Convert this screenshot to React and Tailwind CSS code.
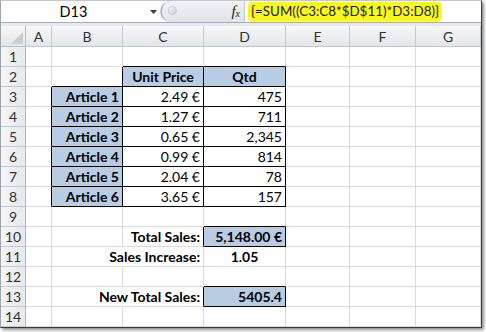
import React from "react";

const cols = ["A", "B", "C", "D", "E", "F", "G"];

// spreadsheet content, keyed by cell address
const cells = {
  C2: { t: "Unit Price", b: true, a: "center", blue: true, box: true },
  D2: { t: "Qtd", b: true, a: "center", blue: true, box: true },
  B3: { t: "Article 1", b: true, a: "right", blue: true, box: true },
  B4: { t: "Article 2", b: true, a: "right", blue: true, box: true },
  B5: { t: "Article 3", b: true, a: "right", blue: true, box: true },
  B6: { t: "Article 4", b: true, a: "right", blue: true, box: true },
  B7: { t: "Article 5", b: true, a: "right", blue: true, box: true },
  B8: { t: "Article 6", b: true, a: "right", blue: true, box: true },
  C3: { t: "2.49 €", a: "right", box: true },
  C4: { t: "1.27 €", a: "right", box: true },
  C5: { t: "0.65 €", a: "right", box: true },
  C6: { t: "0.99 €", a: "right", box: true },
  C7: { t: "2.04 €", a: "right", box: true },
  C8: { t: "3.65 €", a: "right", box: true },
  D3: { t: "475", a: "right", box: true },
  D4: { t: "711", a: "right", box: true },
  D5: { t: "2,345", a: "right", box: true },
  D6: { t: "814", a: "right", box: true },
  D7: { t: "78", a: "right", box: true },
  D8: { t: "157", a: "right", box: true },
  C10: { t: "Total Sales:", b: true, a: "right" },
  D10: { t: "5,148.00 €", b: true, a: "right", blue: true, box: true },
  C11: { t: "Sales Increase:", b: true, a: "right" },
  D11: { t: "1.05", b: true, a: "center" },
  C13: { t: "New Total Sales:", b: true, a: "right" },
  D13: { t: "5405.4", b: true, a: "right", blue: true, box: true },
};

// cells whose right gridline is hidden by overflowing text
const noRight = ["B11", "B13"];

const boxed = (r, c) => {
  const cell = cells[cols[c] + r];
  return !!(cell && cell.box);
};

function Cell({ r, c }) {
  const addr = cols[c] + r;
  const cell = cells[addr];
  const rightBlack = boxed(r, c) || boxed(r, c + 1);
  const bottomBlack = boxed(r, c) || boxed(r + 1, c);
  const hideRight = noRight.includes(addr);

  return (
    <div
      className={`h-[20px] border-r border-b flex items-end pb-[1px] px-[3px] whitespace-nowrap text-[14px] leading-[17px] text-black
        ${rightBlack ? "border-r-black" : hideRight ? "border-r-white" : "border-r-[#d9d9d9]"}
        ${bottomBlack ? "border-b-black" : "border-b-[#d9d9d9]"}
        ${cell && cell.blue ? "bg-[#b8cce4]" : "bg-white"}
        ${cell && cell.a === "center" ? "justify-center" : "justify-end"}
        ${cell && cell.b ? "font-bold" : ""}`}
    >
      {cell ? cell.t : ""}
    </div>
  );
}

function FormulaBar() {
  return (
    <div className="h-[22px] flex border-b border-[#a7adb5] bg-white">
      {/* Name box */}
      <div className="w-[159px] flex items-center relative">
        <span className="w-[145px] text-center text-[14.5px] text-black">D13</span>
        <svg className="absolute left-[149px] top-[9px]" width="7" height="4" viewBox="0 0 7 4">
          <polygon points="0,0 7,0 3.5,4" fill="#3c3c3c" />
        </svg>
      </div>
      {/* grip + fx */}
      <div className="w-[84px] relative bg-gradient-to-b from-[#f1f3f5] to-[#dfe3e8] rounded-l-full border-l-2 border-[#b3b8bf] flex items-center justify-end pr-[4px]">
        <div className="absolute left-[6px] top-[5px] w-[9px] h-[9px] rounded-full bg-gradient-to-br from-[#fafafa] to-[#c9cdd2] border border-[#c6cacf]"></div>
        <span className="font-['Liberation_Serif',serif] italic text-[15px] text-[#222] leading-none">
          f<span className="text-[10px] align-[-1px]">x</span>
        </span>
      </div>
      {/* formula */}
      <div className="flex-1 flex items-center border-l border-[#c2c7ce] pl-[3px]">
        <span className="bg-[#f8f81e] rounded-[4px] px-[3px] h-[19px] flex items-center text-[13.4px] text-[#1a1a1a]">
          {"{=SUM((C3:C8*$D$11)*D3:D8)}"}
        </span>
      </div>
    </div>
  );
}

export default function App() {
  const rows = Array.from({ length: 14 }, (_, i) => i + 1);

  return (
    <div className="w-[486px] h-[332px] bg-white overflow-hidden font-['Lato',sans-serif]">
      <div className="w-[482px] h-[328px] border-l border-t border-l-[#9ea4ab] border-t-[#c2c7cd] border-r border-b border-r-[#3a3a3a] border-b-[#3a3a3a] shadow-[2px_2px_3px_rgba(0,0,0,0.45)]">
        <FormulaBar />
        <div className="h-[3px] bg-[#e6e9ed]"></div>

        <div className="grid grid-cols-[25px_26px_71px_81px_82px_64px_66px_65px]">
          {/* column headers */}
          <div className="h-[21px] border-r border-b border-[#b9bfc7] bg-gradient-to-b from-[#f7f8f9] to-[#e3e6ea] relative">
            <svg className="absolute right-[2px] bottom-[2px]" width="12" height="12" viewBox="0 0 12 12">
              <polygon points="12,0 12,12 0,12" fill="#c9ced4" />
            </svg>
          </div>
          {cols.map((c) => (
            <div
              key={c}
              className="h-[21px] border-r border-b border-[#c3c8cf] bg-gradient-to-b from-[#f7f8f9] to-[#e3e6ea] flex items-center justify-center text-[14px] text-[#333]"
            >
              {c}
            </div>
          ))}

          {rows.map((r) => (
            <React.Fragment key={r}>
              <div className="h-[20px] border-r border-b border-[#c3c8cf] border-r-[#b3b9c1] bg-gradient-to-r from-[#f4f5f7] to-[#e6e9ed] flex items-center justify-center text-[14px] text-[#333]">
                {r}
              </div>
              {cols.map((_, c) => (
                <Cell key={c} r={r} c={c} />
              ))}
            </React.Fragment>
          ))}
        </div>
      </div>
    </div>
  );
}
